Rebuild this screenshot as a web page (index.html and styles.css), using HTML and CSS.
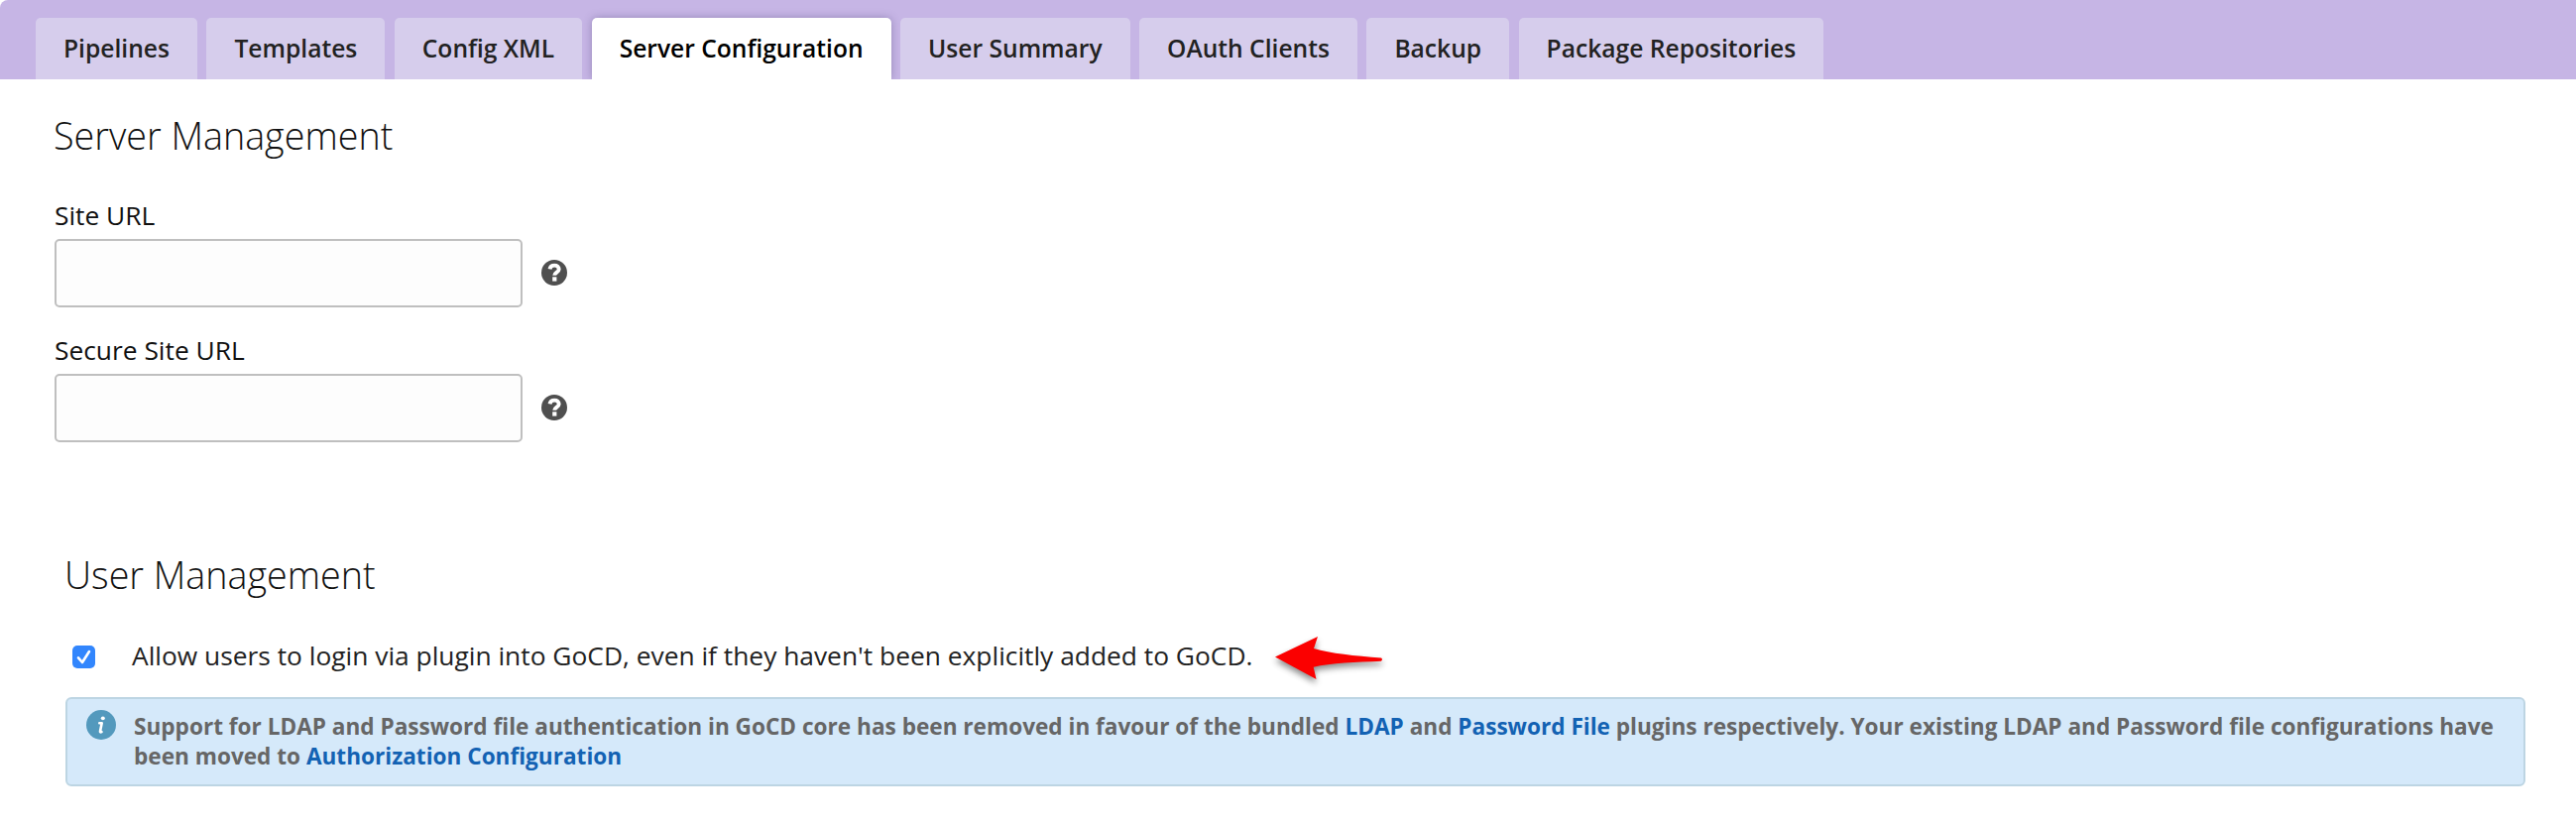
FILE: index.html
```html
<!DOCTYPE html>
<html lang="en">
<head>
<meta charset="utf-8">
<title>Server Configuration</title>
<link rel="stylesheet" href="styles.css">
</head>
<body>
<nav class="tabs">
  <a class="tab">Pipelines</a>
  <a class="tab">Templates</a>
  <a class="tab">Config XML</a>
  <a class="tab active">Server Configuration</a>
  <a class="tab">User Summary</a>
  <a class="tab">OAuth Clients</a>
  <a class="tab">Backup</a>
  <a class="tab">Package Repositories</a>
</nav>
<main class="content">
  <section class="server">
    <h2 class="title">Server Management</h2>
    <div class="field">
      <label class="label" for="site">Site URL</label>
      <div class="row">
        <input class="input" id="site" type="text">
        <svg class="help" viewBox="0 0 26 26"><circle cx="13" cy="13" r="13" fill="#4f4f4f"/><path d="M8.500 9.300C9 6.500 10.800 5.600 13.200 5.600c2.700 0 4.500 1.500 4.500 3.800 0 3.200-4.500 3.200-4.500 6.400" fill="none" stroke="#fff" stroke-width="3.900"/><rect x="11.200" y="17.300" width="4.200" height="4.300" fill="#fff"/></svg>
      </div>
    </div>
    <div class="field">
      <label class="label" for="secure">Secure Site URL</label>
      <div class="row">
        <input class="input" id="secure" type="text">
        <svg class="help" viewBox="0 0 26 26"><circle cx="13" cy="13" r="13" fill="#4f4f4f"/><path d="M8.500 9.300C9 6.500 10.800 5.600 13.200 5.600c2.700 0 4.500 1.500 4.500 3.800 0 3.200-4.500 3.200-4.500 6.400" fill="none" stroke="#fff" stroke-width="3.900"/><rect x="11.200" y="17.300" width="4.200" height="4.300" fill="#fff"/></svg>
      </div>
    </div>
  </section>
  <section class="users">
    <h2 class="title">User Management</h2>
    <div class="allow">
      <svg class="check" viewBox="0 0 23 23"><rect width="23" height="23" rx="5" fill="#3286fd"/><path d="M6 12.300l4 4.700L17 6" fill="none" stroke="#fff" stroke-width="2.600" stroke-linecap="round" stroke-linejoin="round"/></svg>
      <span class="allow-text">Allow users to login via plugin into GoCD, even if they haven't been explicitly added to GoCD.</span>
      <svg class="arrow" viewBox="0 0 109 44"><path d="M0 20.500L43 0l-4 12C56 17 80 19.500 107 21.400q2 1.600 0 3.400C82 26 56 26.500 38.700 30.800L41.500 43z" fill="#fb0000"/></svg>
    </div>
    <div class="notice">
      <svg class="info" viewBox="0 0 30 30"><circle cx="15" cy="15" r="15" fill="#5399bd"/><ellipse cx="16.800" cy="8.300" rx="2" ry="1.900" fill="#fff"/><path d="M13.300 13.300h2.400L14 21.500q-.2 1.500 1.500.6" fill="none" stroke="#fff" stroke-width="2.600" stroke-linecap="round" stroke-linejoin="round"/></svg>
      <p class="notice-text">Support for LDAP and Password file authentication in GoCD core has been removed in favour of the bundled <a class="link">LDAP</a> and <a class="link">Password File</a> plugins respectively. Your existing LDAP and Password file configurations have been moved to <a class="link">Authorization Configuration</a></p>
    </div>
  </section>
</main>
</body>
</html>
```
FILE: styles.css
```css
* { box-sizing: border-box; }
body { margin: 0; background: #fff; color: #111; font-family: "Open Sans", sans-serif; }
.tabs { display: flex; gap: 9.5px; height: 80px; padding: 18px 36px 0; background: #c6b5e5; border-top-left-radius: 8px; overflow: hidden; }
.tab { height: 62px; padding: 0 28px; border-radius: 5px 5px 0 0; background: #d6cdec; color: #222; font-size: 24.6px; font-weight: 600; line-height: 61px; white-space: nowrap; }
.tab.active { background: #fff; color: #000; box-shadow: 0 0 9px rgba(80, 70, 120, .4); }
.content { padding: 30px 51px 0 55px; }
.title { margin: 0; font-size: 37.7px; font-weight: 300; line-height: 52px; color: #111; }
.server .title { height: 52px; line-height: 53px; text-indent: -1px; }
.field { margin-top: 25px; }
.server .title + .field { margin-top: 37px; }
.label { display: block; height: 42px; font-size: 26.35px; line-height: 37px; }
.row { display: flex; align-items: center; gap: 18.5px; }
.input { width: 472px; height: 69px; border: 2px solid #bfbfbf; border-radius: 5px; background: #fdfdfd; }
.help { width: 26px; height: 26px; margin-bottom: 1px; }
.users { margin: 107px 0 0 11px; }
.users .title { height: 52px; line-height: 54px; text-indent: -1px; }
.allow { display: flex; align-items: center; height: 40px; margin-top: 36px; padding-left: 7px; }
.check { width: 23px; height: 23px; margin-top: 2px; }
.allow-text { margin-left: 37px; font-size: 26.35px; line-height: 40px; white-space: nowrap; color: #222; }
.arrow { width: 109px; height: 44px; margin: 6px 0 0 23px; overflow: visible; filter: drop-shadow(0 4px 3px rgba(0, 0, 0, .45)); }
.notice { display: flex; gap: 18px; height: 90px; margin-top: 22px; padding: 11px 20px 0 19px; border: 2px solid #bdd5e3; border-radius: 6px; background: #d5e9fa; }
.info { flex: none; width: 30px; height: 30px; }
.notice-text { margin: 2px 0 0; font-size: 22.6px; font-weight: 700; line-height: 30px; color: #666; }
.link { color: #1362b3; }
```
